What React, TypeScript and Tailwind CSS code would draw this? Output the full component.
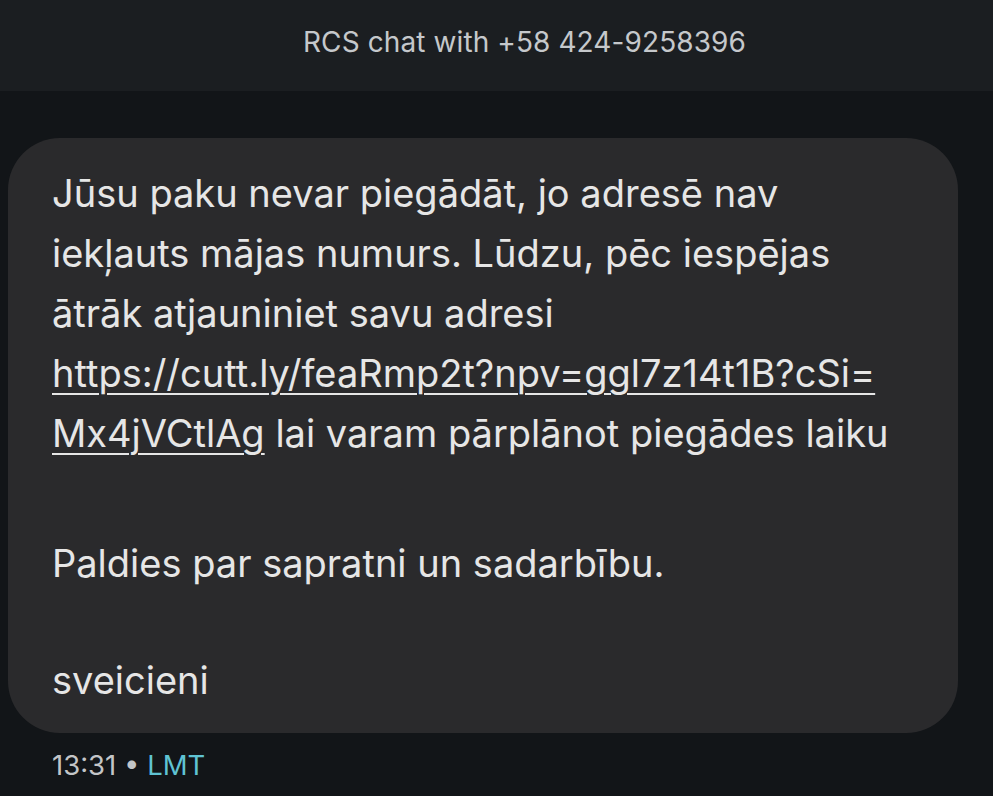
import React from 'react'

// 消息正文,按截图逐行断开
const lines: React.ReactNode[] = [
  'Jūsu paku nevar piegādāt, jo adresē nav',
  'iekļauts mājas numurs. Lūdzu, pēc iespējas',
  'ātrāk atjauniniet savu adresi',
  <span className="underline decoration-2 underline-offset-[6px]">https://cutt.ly/feaRmp2t?npv=ggl7z14t1B?cSi=</span>,
  <>
    <span className="underline decoration-2 underline-offset-[6px]">Mx4jVCtlAg</span> lai varam pārplānot piegādes laiku
  </>,
]

function App() {
  return (
    <div
      className="w-[993px] h-[796px] overflow-hidden bg-[#121518] flex flex-col"
      style={{ fontFamily: 'Inter, Roboto, "Noto Sans", sans-serif' }}
    >
      {/* 顶部标题栏 */}
      <div className="h-[91px] bg-[#1b1e21] flex justify-center pl-[56px] pt-[23px]">
        <span className="text-[28px] leading-[38px] text-[#c5c8cb] tracking-[0.1px]">
          RCS chat with +58 424-9258396
        </span>
      </div>

      <div className="pt-[47px] pl-[8px]">
        {/* 消息气泡 */}
        <div className="w-[950px] h-[595px] bg-[#2a2a2c] rounded-[52px] pl-[44px] pt-[25px] text-[38px] leading-[60px] text-[#e6e6e6]">
          {lines.map((l, i) => (
            <div key={i} className="whitespace-nowrap">{l}</div>
          ))}
          <div className="h-[70px]" />
          <div>Paldies par sapratni un sadarbību.</div>
          <div className="h-[57px]" />
          <div>sveicieni</div>
        </div>
        <div className="pl-[44px] pt-[14px] text-[27.5px] leading-[36px] text-[#c3c5c7]">
          13:31 • <span className="text-[#5fc3d3]">LMT</span>
        </div>
      </div>
    </div>
  )
}
export default App
